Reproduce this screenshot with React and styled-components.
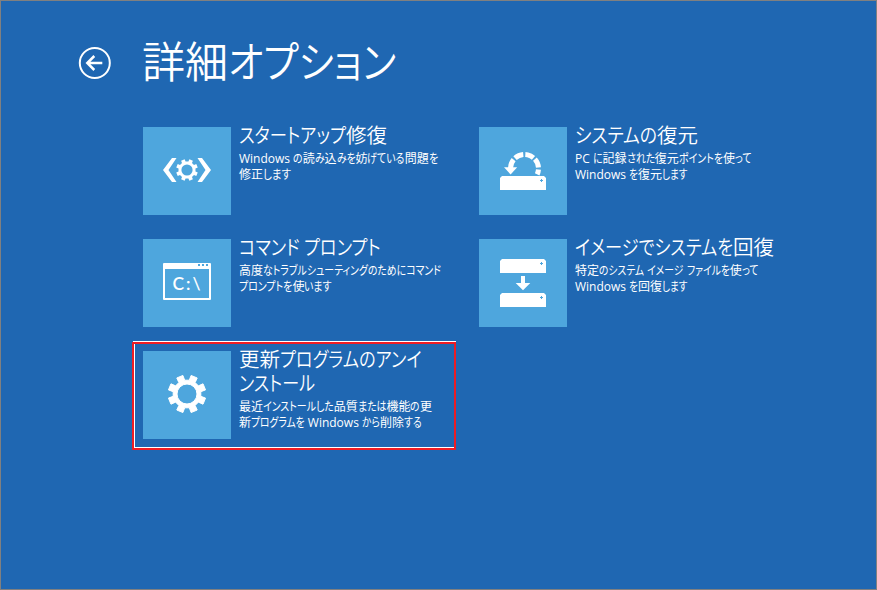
import React, { useLayoutEffect, useRef } from "react";
import styled, { createGlobalStyle } from "styled-components";

const GlobalStyle = createGlobalStyle`
    * {
        box-sizing: border-box;
    }

    body {
        margin: 0;
        background: #1f67b2;
    }
`;

const Screen = styled.main`
    width: 877px;
    height: 590px;
    overflow: hidden;
    border: 1px solid #808080;
    background: #1f67b2;
    color: #fff;
    font-family: "Open Sans", "Noto Sans CJK JP", sans-serif;
`;

const Header = styled.header`
    display: flex;
    align-items: flex-start;
    height: 126px;
    padding: 28px 0 0 77px;
`;

const BackButton = styled.button`
    width: 34px;
    height: 34px;
    margin: 17px 30px 0 0;
    padding: 0;
    border: 0;
    background: none;
    color: inherit;

    svg {
        display: block;
    }
`;

const Heading = styled.h1`
    margin: 0;
    font-family: "Noto Sans CJK JP", sans-serif;
    font-size: 43px;
    font-weight: 350;
    line-height: 60px;
    font-feature-settings: "palt";
`;

const Columns = styled.div`
    display: flex;
    gap: 12px;
    padding-left: 132px;
`;

const Column = styled.div`
    display: flex;
    flex-direction: column;
    width: 324px;
`;

const Option = styled.section`
    display: flex;
    height: 112px;
    padding-left: 10px;
`;

const Tile = styled.div`
    flex: none;
    width: 88px;
    height: 88px;
    background: #4ea6dd;

    svg {
        display: block;
    }
`;

const Texts = styled.div`
    padding-left: 8px;
`;

const OptionTitle = styled.h2`
    margin: -5px 0 0;
    font-family: "Noto Sans CJK JP", sans-serif;
    font-size: 20.5px;
    font-weight: 350;
    line-height: 24px;
    font-feature-settings: "palt";
`;

const Description = styled.p`
    margin: 5px 0 0;
    font-size: 12px;
    line-height: 16px;
    font-feature-settings: "palt";
`;

const LineBox = styled.span`
    display: block;
    width: max-content;
    white-space: pre;
`;

const Kana = styled.span`
    display: inline-block;
    transform-origin: left center;
`;

const Highlight = styled.div`
    position: absolute;
    left: 132px;
    top: 342px;
    width: 324px;
    height: 108px;
    border: 2px solid #ed1c24;
    box-shadow: inset 1px -1px 0 #fff;

    &::before {
        content: "";
        position: absolute;
        left: -1px;
        right: -2px;
        top: -3px;
        height: 1px;
        background: #fff;
    }
`;

const BackIcon = () => (
    <svg width="34" height="34" fill="none" stroke="#fff">
        <circle cx="16.8" cy="17" r="15" strokeWidth="2" />
        <path d="M24.3 17H9.8M16.3 10l-7 7 7 7" strokeWidth="2.5" />
    </svg>
);

const gearPath = (cx, cy, outer, body, hole) => {
    const points = [];
    for (let i = 0; i < 8; i++) {
        const mid = 22.5 + i * 45;
        [[-13, body], [-10, outer], [10, outer], [13, body]].forEach(([offset, radius]) => {
            const a = ((mid + offset) * Math.PI) / 180;
            points.push(`${(cx + radius * Math.cos(a)).toFixed(2)} ${(cy + radius * Math.sin(a)).toFixed(2)}`);
        });
    }
    return `M${points.join("L")}ZM${cx - hole} ${cy}a${hole} ${hole} 0 1 0 ${hole * 2} 0a${hole} ${hole} 0 1 0 ${-hole * 2} 0Z`;
};

const StartupIcon = () => (
    <svg width="88" height="88" fill="#fff">
        <path d={gearPath(44, 43, 11, 8.6, 5.6)} fillRule="evenodd" />
        <path d="M29 31h4.5L25.5 43l8 12H29L20 43ZM59 31h-4.5l8 12-8 12H59l9-12Z" />
    </svg>
);

const GearIcon = () => (
    <svg width="88" height="88" fill="#fff">
        <path
            d={gearPath(44, 43, 19, 14, 10)}
            fillRule="evenodd"
            stroke="#fff"
            strokeWidth="1"
            strokeLinejoin="round"
        />
    </svg>
);

const PromptIcon = () => (
    <svg width="88" height="88" fill="#fff">
        <path d="M21 24h46a1 1 0 0 1 1 1v35a1 1 0 0 1-1 1H21a1 1 0 0 1-1-1V25a1 1 0 0 1 1-1Zm1 6v29h44V30Z" fillRule="evenodd" />
        <path d="M55 25h2v2h-2zM59 25h2v2h-2zM63 25h2v2h-2z" fill="#4ea6dd" />
        <text x="29.5" y="51" fontFamily="Lato, sans-serif" fontSize="17.5" fontWeight="600" textLength="28">C:\</text>
    </svg>
);

const Drive = ({ y }) => (
    <g transform={`translate(21 ${y})`}>
        <path d="M2 0h42l2 2v12H0V2Z" fill="#fff" />
        <path d="M41 3h1v1h1v1h-1v1h-1V5h-1V4h1Z" fill="#4ea6dd" />
    </g>
);

const RestoreIcon = () => (
    <svg width="88" height="88">
        <Drive y={49} />
        <path d="M25 40.3h13.2l-6.6 7.2Z" fill="#fff" />
        <path
            d="M31.5 41a14 14 0 1 1 26.7 6.4"
            fill="none"
            stroke="#fff"
            strokeWidth="5"
            strokeDasharray="9 2"
        />
    </svg>
);

const ImageIcon = () => (
    <svg width="88" height="88">
        <Drive y={20} />
        <Drive y={54} />
        <path d="M42 37h4v7h5.3L44 51.3 36.7 44H42Z" fill="#fff" />
    </svg>
);

// every line is [text, width in px]
const columns = [
    [
        {
            icon: StartupIcon,
            title: [["スタートアップ修復", 148]],
            text: [["Windows の読み込みを妨げている問題を", 199], ["修正します", 52]],
        },
        {
            icon: PromptIcon,
            title: [["コマンド プロンプト", 142]],
            text: [["高度なトラブルシューティングのためにコマンド", 202], ["プロンプトを使います", 93]],
        },
        {
            icon: GearIcon,
            title: [["更新プログラムのアンイ", 182.5], ["ンストール", 76]],
            text: [["最近インストールした品質または機能の更", 193], ["新プログラムを Windows から削除する", 182.5]],
        },
    ],
    [
        {
            icon: RestoreIcon,
            title: [["システムの復元", 123]],
            text: [["PC に記録された復元ポイントを使って", 176.5], ["Windows を復元します", 112.5]],
        },
        {
            icon: ImageIcon,
            title: [["イメージでシステムを回復", 199]],
            text: [["特定のシステム イメージ ファイルを使って", 183], ["Windows を回復します", 112.5]],
        },
    ],
];

// Kanji keep their full width, the kana between them are condensed so the line fits
const Line = ({ text, width }) => {
    const box = useRef(null);

    useLayoutEffect(() => {
        const runs = [...box.current.querySelectorAll("[data-kana]")];
        runs.forEach((run) => {
            run.style.transform = "none";
            run.style.marginRight = "0";
        });
        const widths = runs.map((run) => run.getBoundingClientRect().width);
        const kana = widths.reduce((sum, w) => sum + w, 0);
        const scale = 1 - (box.current.getBoundingClientRect().width - width) / kana;
        runs.forEach((run, i) => {
            run.style.transform = `scaleX(${scale})`;
            run.style.marginRight = `${widths[i] * (scale - 1)}px`;
        });
    }, [text, width]);

    return (
        <LineBox ref={box}>
            {text.split(/([\u3040-\u30ff]+)/).filter(Boolean).map((part, i) => (
                /[\u3040-\u30ff]/.test(part) ? <Kana key={i} data-kana>{part}</Kana> : part
            ))}
        </LineBox>
    );
};

const Lines = ({ lines }) => lines.map(([text, width]) => (
    <Line key={text} text={text} width={width} />
));

const OptionCard = ({ option }) => {
    const Icon = option.icon;

    return (
        <Option>
            <Tile><Icon /></Tile>
            <Texts>
                <OptionTitle><Lines lines={option.title} /></OptionTitle>
                <Description><Lines lines={option.text} /></Description>
            </Texts>
        </Option>
    );
};

const App = () => (
    <Screen>
        <GlobalStyle />
        <Header>
            <BackButton aria-label="戻る"><BackIcon /></BackButton>
            <Heading><Line text="詳細オプション" width={254} /></Heading>
        </Header>
        <Columns>
            {columns.map((options, index) => (
                <Column key={index}>
                    {options.map((option) => (
                        <OptionCard key={option.title[0][0]} option={option} />
                    ))}
                </Column>
            ))}
        </Columns>
        <Highlight />
    </Screen>
);

export default App;
